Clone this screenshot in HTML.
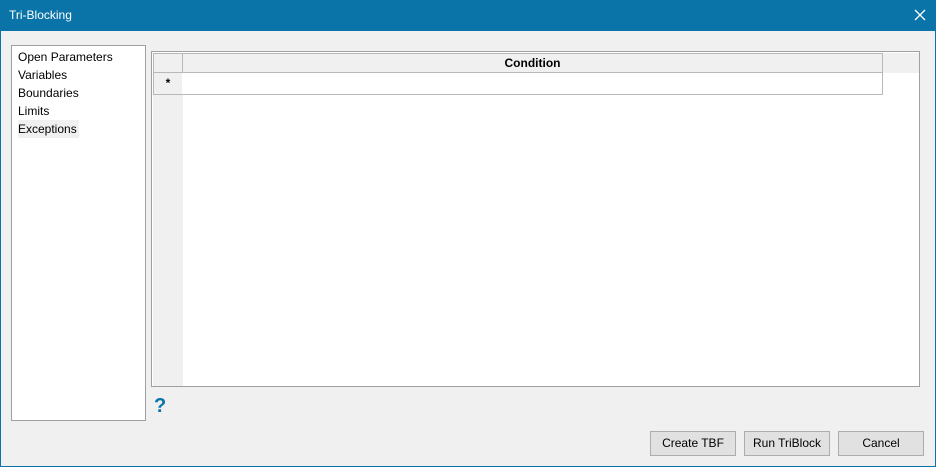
<!DOCTYPE html><html><head><style>
body{margin:0;width:936px;height:467px;position:relative;background:#f0f0f0;font-family:"Segoe UI","Liberation Sans",sans-serif;font-size:12px;color:#000;overflow:hidden}
.a{position:absolute;box-sizing:border-box}
.btn{background:#e1e1e1;border:1px solid #adadad;text-align:center;line-height:22px;height:25px;width:86px;top:431px}
</style></head><body>
<div class="a" style="left:0;top:0;width:936px;height:467px;border:1px solid #0a74a8"></div>
<div class="a" style="left:0;top:0;width:936px;height:31px;background:#0a74a8;color:#fff;font-size:12px;line-height:31px;padding-left:9px">Tri-Blocking</div>
<svg class="a" style="left:914px;top:9px" width="12" height="12"><path d="M1 1L11 11M11 1L1 11" stroke="#fff" stroke-width="1.3"/></svg>
<div class="a" style="left:11px;top:45px;width:135px;height:376px;background:#fff;border:1px solid #a0a0a0;padding:2px 0 0 6px;line-height:18px">
<div>Open Parameters</div><div>Variables</div><div>Boundaries</div><div>Limits</div><div style="background:#f0f0f0;display:inline-block;padding-right:2px">Exceptions</div></div>
<div class="a" style="left:151px;top:51px;width:769px;height:336px;background:#fff;border:1px solid #a0a0a0"></div>
<div class="a" style="left:153px;top:53px;width:30px;height:333px;background:#f0f0f0"></div>
<div class="a" style="left:883px;top:53px;width:36px;height:20px;background:#f0f0f0"></div>
<div class="a" style="left:153px;top:53px;width:30px;height:20px;border:1px solid #b8b8b8;background:#f0f0f0"></div>
<div class="a" style="left:182px;top:53px;width:701px;height:20px;border:1px solid #b8b8b8;background:#f0f0f0;text-align:center;font-weight:bold;line-height:18px">Condition</div>
<div class="a" style="left:153px;top:72px;width:30px;height:23px;border:1px solid #b8b8b8;background:#f0f0f0;text-align:center;font-weight:bold;line-height:21px">*</div>
<div class="a" style="left:182px;top:72px;width:701px;height:23px;border:1px solid #b8b8b8;border-left:none;background:#fff"></div>
<div class="a" style="left:154px;top:394px;color:#0a74a8;font-weight:bold;font-size:20px;line-height:24px">?</div>
<div class="a btn" style="left:650px">Create TBF</div>
<div class="a btn" style="left:744px">Run TriBlock</div>
<div class="a btn" style="left:838px">Cancel</div>
</body></html>
